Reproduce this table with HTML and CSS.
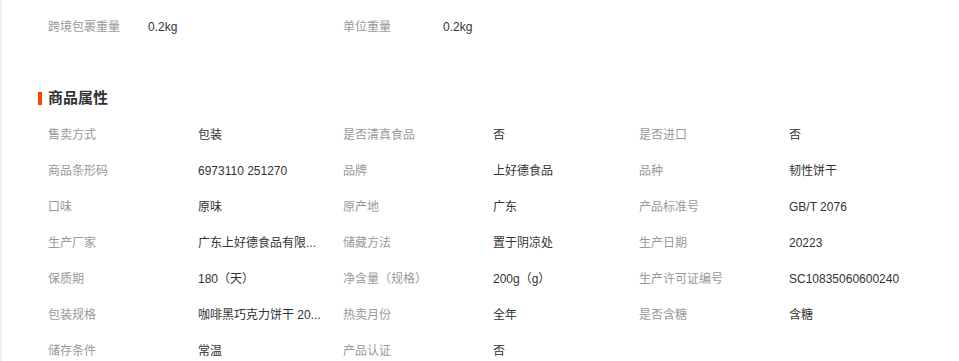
FILE: index.html
```html
<!DOCTYPE html>
<html lang="zh-CN">
<head>
<meta charset="utf-8">
<link rel="stylesheet" href="styles.css">
</head>
<body>
<div class="page">
  <div class="side"></div>
  <div class="main">
    <div class="top-row">
      <div class="pair"><span class="label">跨境包裹重量</span><span class="value">0.2kg</span></div>
      <div class="pair"><span class="label">单位重量</span><span class="value">0.2kg</span></div>
    </div>
    <h2 class="heading"><span class="bar"></span>商品属性</h2>
    <div class="attrs">
      <span class="k">售卖方式</span><span class="v">包装</span>
      <span class="k">是否清真食品</span><span class="v">否</span>
      <span class="k">是否进口</span><span class="v">否</span>

      <span class="k">商品条形码</span><span class="v">6973110 251270</span>
      <span class="k">品牌</span><span class="v">上好德食品</span>
      <span class="k">品种</span><span class="v">韧性饼干</span>

      <span class="k">口味</span><span class="v">原味</span>
      <span class="k">原产地</span><span class="v">广东</span>
      <span class="k">产品标准号</span><span class="v">GB/T 2076</span>

      <span class="k">生产厂家</span><span class="v" title="广东上好德食品有限公司">广东上好德食品有限...</span>
      <span class="k">储藏方法</span><span class="v">置于阴凉处</span>
      <span class="k">生产日期</span><span class="v">20223</span>

      <span class="k">保质期</span><span class="v">180（天）</span>
      <span class="k">净含量（规格）</span><span class="v">200g（g）</span>
      <span class="k">生产许可证编号</span><span class="v">SC10835060600240</span>

      <span class="k">包装规格</span><span class="v" title="咖啡黑巧克力饼干 200g">咖啡黑巧克力饼干 20...</span>
      <span class="k">热卖月份</span><span class="v">全年</span>
      <span class="k">是否含糖</span><span class="v">含糖</span>

      <span class="k">储存条件</span><span class="v">常温</span>
      <span class="k">产品认证</span><span class="v">否</span>
      <span class="k"></span><span class="v"></span>
    </div>
  </div>
</div>
</body>
</html>
```

FILE: styles.css
```css
html, body {
  margin: 0;
  padding: 0;
  background: #fff;
}
body {
  font-family: "Liberation Sans", "Noto Sans CJK SC", sans-serif;
  font-size: 12px;
  color: #333;
}
.page {
  display: flex;
  min-height: 361px;
}
.side {
  width: 2px;
  background: #f0f0f0;
  flex: none;
}
.main {
  padding-left: 36px;
  flex: 1;
}
.top-row {
  display: flex;
  padding: 9px 0 0 10px;
}
.pair {
  display: flex;
  width: 295px;
  line-height: 36px;
}
.label {
  width: 100px;
  color: #999;
  flex: none;
}
.value {
  color: #333;
}
.heading {
  display: flex;
  align-items: center;
  gap: 6px;
  margin: 41px 0 7px 0;
  font-size: 15px;
  font-weight: bold;
  line-height: 24px;
  color: #333;
}
.bar {
  width: 4px;
  height: 13px;
  background: #ff4400;
}
.attrs {
  display: grid;
  grid-template-columns: 150px 145px 150px 146px 150px 145px;
  grid-auto-rows: 36px;
  padding-left: 10px;
  line-height: 36px;
}
.k {
  color: #999;
  white-space: nowrap;
}
.v {
  color: #333;
  white-space: nowrap;
}
```
